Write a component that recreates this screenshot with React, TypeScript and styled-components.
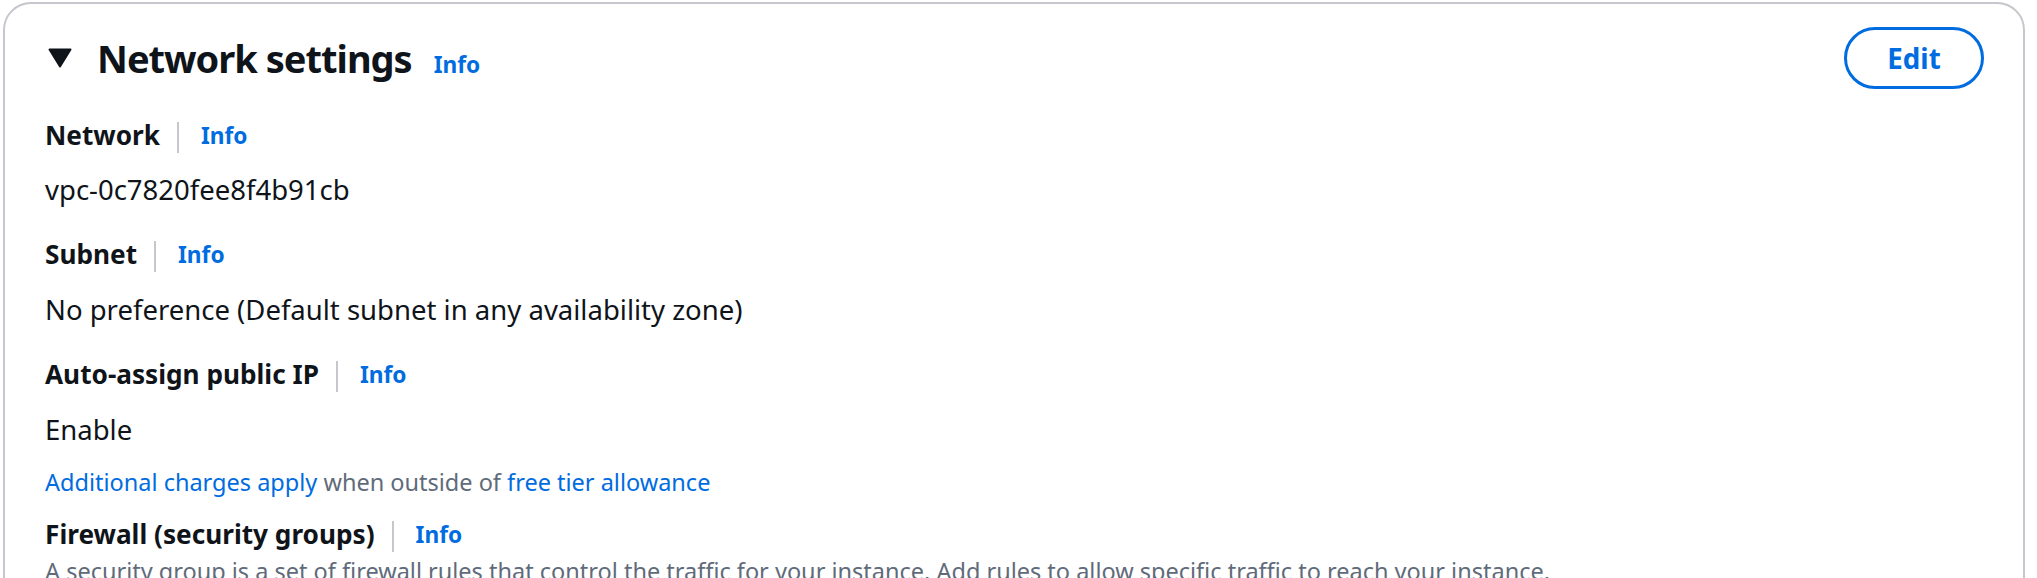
import React from "react";
import styled, { createGlobalStyle } from "styled-components";

const GlobalStyle = createGlobalStyle`
  html, body {
    margin: 0;
    padding: 0;
    overflow: hidden;
    background: #ffffff;
  }
  body {
    font-family: "Noto Sans", "Open Sans", Arial, sans-serif;
    color: #0f141a;
  }
`;

const Page = styled.div`
  padding: 2px 12px 0 3px;
`;

const Card = styled.section`
  border: 2px solid #c6c6cd;
  border-radius: 28px;
  padding: 23px 39px 40px 40px;
  background: #fff;
`;

const Header = styled.div`
  display: flex;
  align-items: center;
  justify-content: space-between;
  height: 62px;
`;

const TitleGroup = styled.div`
  display: flex;
  align-items: center;
`;

const TitleText = styled.div`
  display: flex;
  align-items: baseline;
`;

const Caret = styled.svg`
  width: 24px;
  height: 20px;
  margin-left: 3px;
  margin-right: 25px;
  flex: none;
`;

const Title = styled.h2`
  margin: 0;
  font-size: 38px;
  line-height: 52px;
  font-weight: 700;
  color: #0f141a;
  letter-spacing: -1px;
`;

const InfoLink = styled.a`
  color: #006ce0;
  font-weight: 700;
  font-size: 22.7px;
  text-decoration: none;
  cursor: pointer;
`;

const TitleInfo = styled(InfoLink)`
  margin-left: 22px;
`;

const EditButton = styled.button`
  box-sizing: border-box;
  width: 140px;
  height: 62px;
  border: 3px solid #006ce0;
  border-radius: 40px;
  background: #fff;
  color: #006ce0;
  font-family: inherit;
  font-size: 27.7px;
  font-weight: 700;
  cursor: pointer;
`;

const Field = styled.div<{ $mt: number }>`
  display: flex;
  flex-direction: column;
  margin-top: ${(p) => p.$mt}px;
`;

const LabelRow = styled.div`
  display: flex;
  align-items: center;
  height: 35px;
`;

const Label = styled.span`
  font-size: 26.2px;
  font-weight: 700;
  color: #0f141a;
  line-height: 35px;
`;

const Divider = styled.span`
  width: 2px;
  height: 31px;
  background: #c6c6cd;
  margin: 4px 22px 0 17px;
  align-self: flex-start;
`;

const Value = styled.div<{ $gap: number }>`
  margin-top: ${(p) => p.$gap}px;
  font-size: 27.5px;
  line-height: 35px;
  color: #0f141a;
`;

const SmallText = styled.div<{ $gap: number }>`
  margin-top: ${(p) => p.$gap}px;
  font-size: 23.5px;
  line-height: 35px;
  color: #5f6b7a;
`;

const TextLink = styled.a`
  color: #006ce0;
  text-decoration: none;
  cursor: pointer;
`;

const FieldLabel: React.FC<{ children: React.ReactNode }> = ({ children }) => (
  <LabelRow>
    <Label>{children}</Label>
    <Divider />
    <InfoLink>Info</InfoLink>
  </LabelRow>
);

export default function App() {
  return (
    <>
      <GlobalStyle />
      <Page>
        <Card>
          <Header>
            <TitleGroup>
              <Caret viewBox="0 0 24 20" aria-hidden="true">
                <path
                  d="M1.5 1.5 H22.5 L12 18.5 Z"
                  fill="#0f141a"
                  stroke="#0f141a"
                  strokeWidth="2"
                  strokeLinejoin="round"
                />
              </Caret>
              <TitleText>
                <Title>Network settings</Title>
                <TitleInfo>Info</TitleInfo>
              </TitleText>
            </TitleGroup>
            <EditButton>Edit</EditButton>
          </Header>

          <Field $mt={29}>
            <FieldLabel>Network</FieldLabel>
            <Value $gap={19}>vpc-0c7820fee8f4b91cb</Value>
          </Field>

          <Field $mt={30}>
            <FieldLabel>Subnet</FieldLabel>
            <Value $gap={20}>
              No preference (Default subnet in any availability zone)
            </Value>
          </Field>

          <Field $mt={30}>
            <FieldLabel>Auto-assign public IP</FieldLabel>
            <Value $gap={20}>Enable</Value>
            <SmallText $gap={18}>
              <TextLink>Additional charges apply</TextLink> when outside of{" "}
              <TextLink>free tier allowance</TextLink>
            </SmallText>
          </Field>

          <Field $mt={17}>
            <FieldLabel>Firewall (security groups)</FieldLabel>
            <SmallText $gap={2}>
              A security group is a set of firewall rules that control the
              traffic for your instance. Add rules to allow specific traffic to
              reach your instance.
            </SmallText>
          </Field>
        </Card>
      </Page>
    </>
  );
}
